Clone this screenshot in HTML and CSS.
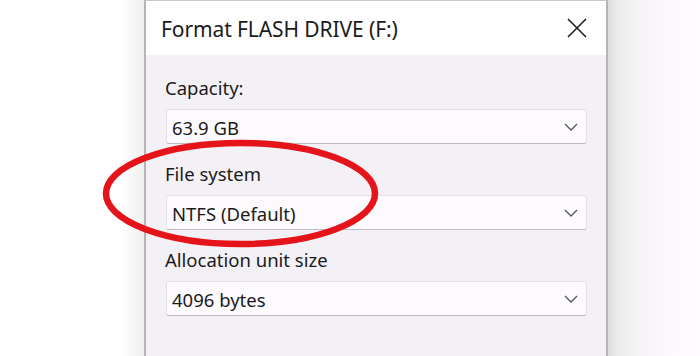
FILE: index.html
```html
<!DOCTYPE html>
<html>
<head>
<meta charset="utf-8">
<link rel="stylesheet" href="styles.css">
</head>
<body>
<div class="page">
  <div class="side left"></div>
  <div class="window">
    <div class="titlebar">
      <span class="title">Format FLASH DRIVE (F:)</span>
      <svg class="close" width="20" height="20" viewBox="0 0 20 20"><path d="M1 1L19 19M19 1L1 19" stroke="#1f1f1f" stroke-width="1.6" fill="none"/></svg>
    </div>
    <div class="body">
      <div class="field">
        <div class="label">Capacity:</div>
        <div class="select"><span>63.9 GB</span><svg class="chev" width="14" height="8" viewBox="0 0 14 8"><path d="M1 1L7 7L13 1" stroke="#555" stroke-width="1.3" fill="none"/></svg></div>
      </div>
      <div class="field">
        <div class="label">File system</div>
        <div class="select"><span>NTFS (Default)</span><svg class="chev" width="14" height="8" viewBox="0 0 14 8"><path d="M1 1L7 7L13 1" stroke="#555" stroke-width="1.3" fill="none"/></svg></div>
      </div>
      <div class="field">
        <div class="label">Allocation unit size</div>
        <div class="select"><span>4096 bytes</span><svg class="chev" width="14" height="8" viewBox="0 0 14 8"><path d="M1 1L7 7L13 1" stroke="#555" stroke-width="1.3" fill="none"/></svg></div>
      </div>
    </div>
  </div>
  <div class="side right"></div>
  <svg class="circle" width="700" height="356" viewBox="0 0 700 356"><ellipse cx="240.5" cy="193.5" rx="134.5" ry="50.5" fill="none" stroke="#e5141b" stroke-width="6.5"/></svg>
</div>
</body>
</html>
```
FILE: styles.css
```css
html, body {
  margin: 0;
  padding: 0;
  background: #ffffff;
}
.page {
  position: relative;
  width: 700px;
  height: 356px;
  display: flex;
  overflow: hidden;
  font-family: "Noto Sans", "Open Sans", sans-serif;
  color: #1b1b1b;
}
.side.left {
  width: 144px;
  background: linear-gradient(to right, #ffffff 0, #ffffff 120px, #eef0ee 144px);
}
.side.right {
  flex: 1;
  background: linear-gradient(to right, #dcdcdc 0, #ececec 10px, #f6f3f6 30px, #fcf9fc 60px, #fefcfe 94px);
}
.window {
  width: 460px;
  border-left: 2px solid #b5b5b8;
  border-right: 2px solid #b5b5b8;
  border-top: 1px solid #c8c8c8;
  background: #f3f1f5;
  display: flex;
  flex-direction: column;
}
.titlebar {
  height: 54px;
  background: #fefefe;
  display: flex;
  align-items: center;
  justify-content: space-between;
  padding: 0 19px 0 15px;
}
.title {
  font-size: 21px;
  letter-spacing: -0.1px;
  margin-top: 1px;
}
.close {
  display: block;
}
.body {
  padding: 21px 19px 0 19px;
  display: flex;
  flex-direction: column;
  gap: 18px;
}
.label {
  font-size: 18.5px;
  line-height: 24px;
  margin-bottom: 9px;
}
.select {
  box-sizing: border-box;
  height: 35px;
  margin-left: 1px;
  background: #fcfafd;
  border: 1px solid #e3e1e5;
  border-bottom: 1px solid #bdbcc0;
  border-radius: 3px;
  display: flex;
  align-items: center;
  justify-content: space-between;
  padding: 2px 8px 0 5px;
  font-size: 18.5px;
}
.chev {
  display: block;
  margin-top: -2px;
}
.circle {
  position: absolute;
  left: 0;
  top: 0;
  pointer-events: none;
}
```
